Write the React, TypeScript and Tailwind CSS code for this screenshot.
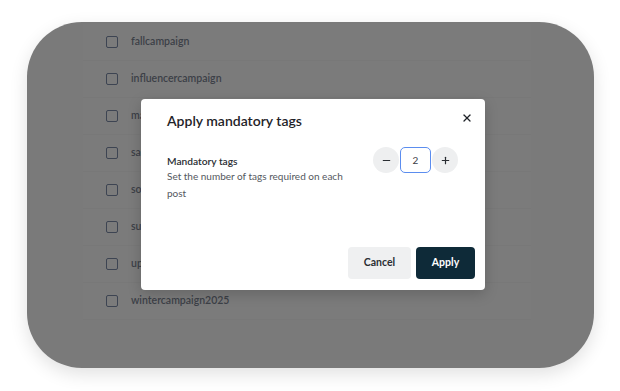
import React from "react";
import { X, Minus, Plus } from "lucide-react";

const tags = [
  "fallcampaign",
  "influencercampaign",
  "marketingcampaign",
  "salescampaign",
  "socialcampaign",
  "summercampaign",
  "upcomingcampaign",
  "wintercampaign2025",
];

const font = { fontFamily: "Lato, 'Noto Sans', sans-serif" };

const TagRow: React.FC<{ name: string }> = ({ name }) => (
  <div className="flex h-[37px] items-center border-b border-[#787878] pl-[23px]">
    <div className="h-[12px] w-[12px] rounded-[2px] border-[1.5px] border-[#3d4452]" />
    <span className="ml-[13px] text-[10.5px] font-semibold text-[#3c4047]">{name}</span>
  </div>
);

export default function App() {
  return (
    <div className="h-[391px] w-[620px] bg-white pl-[27px] pt-[22px]" style={font}>
      <div className="relative h-[346px] w-[567px] overflow-hidden rounded-[55px] bg-[#7a7a7a] shadow-[0_6px_18px_rgba(0,0,0,0.12)]">
        <div className="ml-[56px] mt-[2px] w-[448px] bg-[#7b7b7b]">
          {tags.map((t) => (
            <TagRow key={t} name={t} />
          ))}
        </div>

        <div className="absolute left-[114px] top-[77px] flex h-[191px] w-[344px] flex-col rounded-[4px] bg-white shadow-[0_4px_14px_rgba(0,0,0,0.18)]">
          <button className="absolute right-[12px] top-[13px] text-[#1f2328]">
            <X size={12} strokeWidth={2.6} />
          </button>
          <h2 className="pl-[26px] pt-[12px] text-[14px] font-semibold leading-[20px] text-[#1f2328]">
            Apply mandatory tags
          </h2>
          <div className="mt-[16px] flex items-start justify-between pl-[26px] pr-[27px]">
            <div className="pt-[7px]">
              <div className="text-[10.2px] font-semibold leading-[14px] text-[#2a2e33]">Mandatory tags</div>
              <p className="w-[185px] text-[10px] leading-[17px] text-[#54585e]">
                Set the number of tags required on each post
              </p>
            </div>
            <div className="flex items-center">
              <button className="flex h-[26px] w-[26px] items-center justify-center rounded-full bg-[#eeeff0] text-[#2a2e33]">
                <Minus size={11} strokeWidth={2.6} />
              </button>
              <div className="mx-[1px] flex h-[26px] w-[31px] items-center justify-center rounded-[5px] border-[1.5px] border-[#5b8def] text-[10px] text-[#3c4047]">
                2
              </div>
              <button className="flex h-[26px] w-[26px] items-center justify-center rounded-full bg-[#eeeff0] text-[#2a2e33]">
                <Plus size={11} strokeWidth={2.6} />
              </button>
            </div>
          </div>
          <div className="mt-auto flex justify-end gap-[5px] pb-[11px] pr-[10px]">
            <button className="h-[32px] w-[63px] rounded-[4px] bg-[#eff0f1] text-[10.5px] font-bold text-[#2a2e33]">
              Cancel
            </button>
            <button className="h-[32px] w-[59px] rounded-[4px] bg-[#0e2a38] text-[10.5px] font-bold text-white">
              Apply
            </button>
          </div>
        </div>
      </div>
    </div>
  );
}
